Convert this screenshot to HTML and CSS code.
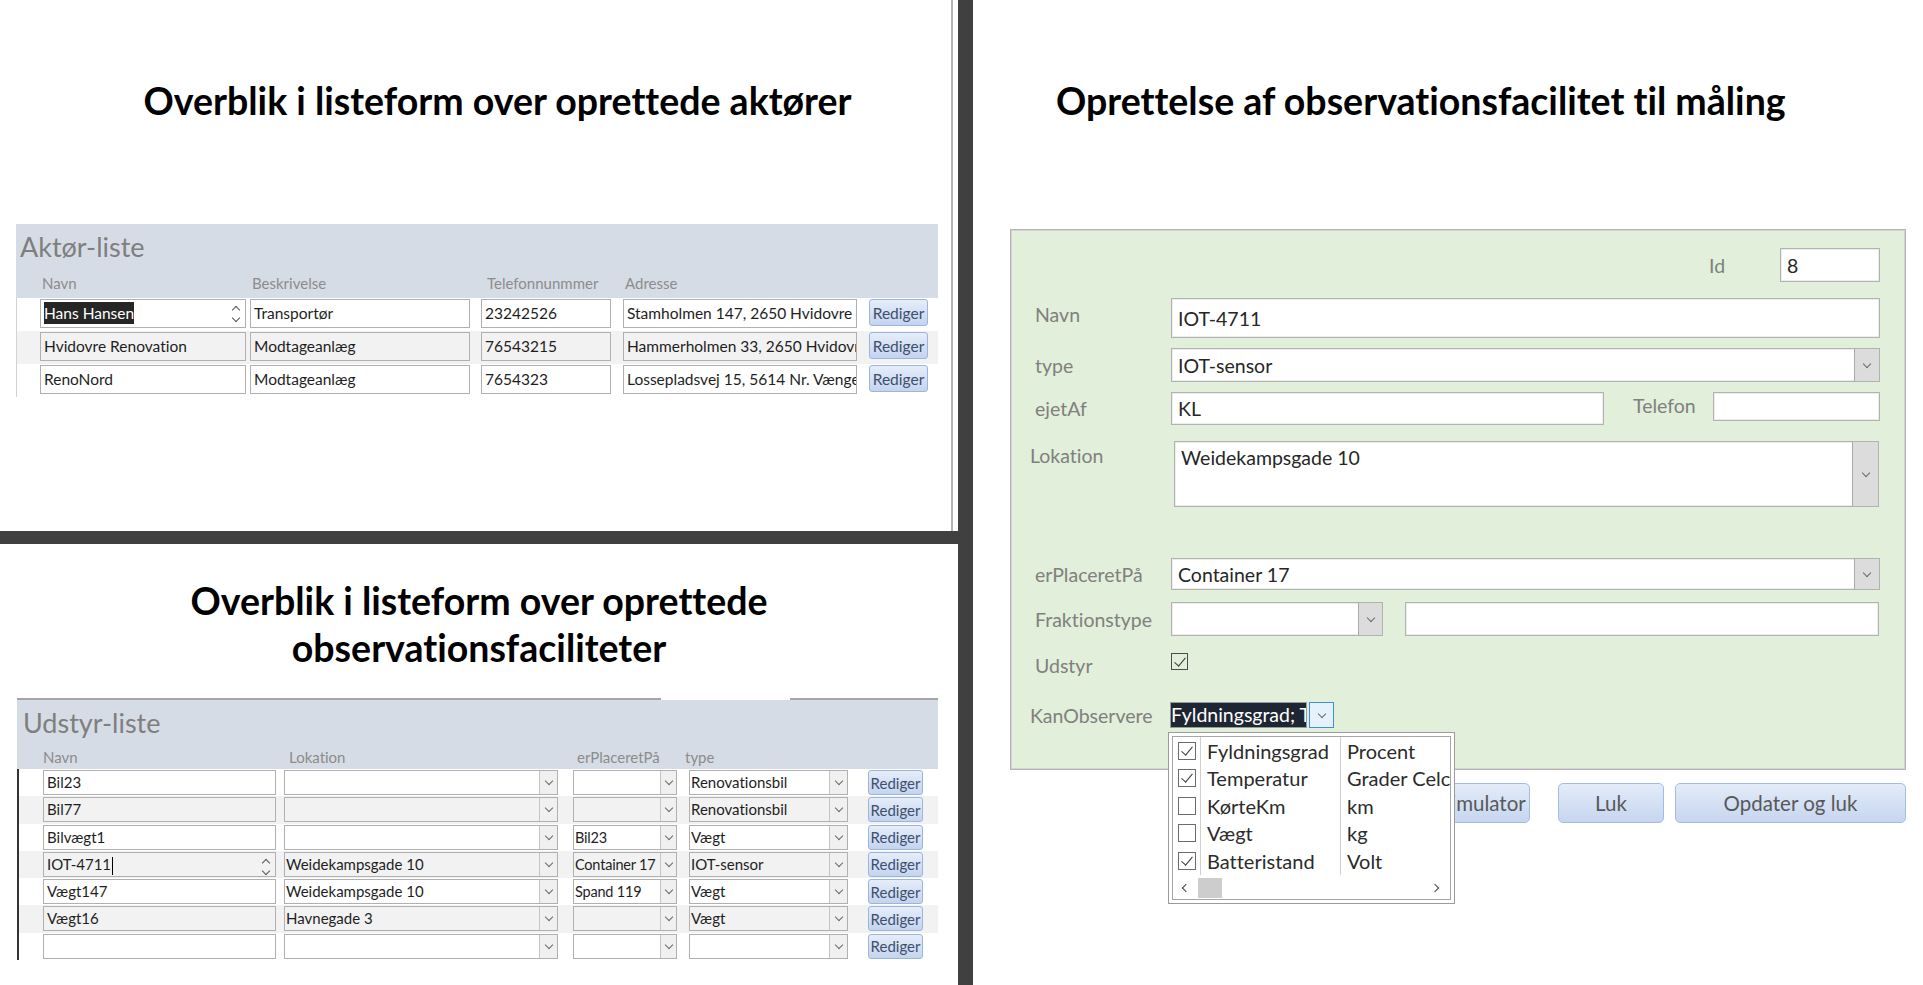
FILE: index.html
```html
<!DOCTYPE html>
<html lang="da">

<head>
    <meta charset="UTF-8">
    <meta name="viewport" content="width=device-width, initial-scale=1.0">
    <title>Aktører og observationsfaciliteter</title>
    <link rel="stylesheet" href="styles.css">
</head>

<body>
    <main class="side">
        <div class="venstre">
            <!-- øverst: aktør-listen -->
            <section class="felt-top">
                <h1 class="overskrift ov-aktor">Overblik i listeform over oprettede aktører</h1>
                <div class="liste aktorliste">
                    <div class="hoved">
                        <div class="listenavn">Aktør-liste</div>
                        <div class="kol">
                            <span>Navn</span>
                            <span>Beskrivelse</span>
                            <span class="k-tlf">Telefonnunmmer</span>
                            <span>Adresse</span>
                        </div>
                    </div>
                    <div class="raekker-a">
                        <div class="raekke">
                            <div class="felt a-navn"><span class="markeret">Hans Hansen</span><span class="spinner"></span></div>
                            <div class="felt a-besk">Transportør</div>
                            <div class="felt a-tlf">23242526</div>
                            <div class="felt a-adr">Stamholmen 147, 2650 Hvidovre</div>
                            <button class="rediger">Rediger</button>
                        </div>
                        <div class="raekke">
                            <div class="felt a-navn">Hvidovre Renovation</div>
                            <div class="felt a-besk">Modtageanlæg</div>
                            <div class="felt a-tlf">76543215</div>
                            <div class="felt a-adr">Hammerholmen 33, 2650 Hvidovre</div>
                            <button class="rediger">Rediger</button>
                        </div>
                        <div class="raekke">
                            <div class="felt a-navn">RenoNord</div>
                            <div class="felt a-besk">Modtageanlæg</div>
                            <div class="felt a-tlf">7654323</div>
                            <div class="felt a-adr">Lossepladsvej 15, 5614 Nr. Vænge</div>
                            <button class="rediger">Rediger</button>
                        </div>
                    </div>
                </div>
            </section>

            <div class="streg-vandret"></div>

            <!-- nederst: udstyr-listen -->
            <section class="felt-bund">
                <h1 class="overskrift ov-udstyr">Overblik i listeform over oprettede<br>observationsfaciliteter</h1>
                <div class="liste udstyrliste">
                    <div class="hoved">
                        <div class="listenavn">Udstyr-liste</div>
                        <div class="kol">
                            <span>Navn</span>
                            <span class="k-lok">Lokation</span>
                            <span class="k-pl">erPlaceretPå</span>
                            <span class="k-type">type</span>
                        </div>
                    </div>
                    <div class="raekker">
                        <div class="raekke">
                            <div class="felt u-navn">Bil23</div>
                            <div class="felt combo u-lok"><span class="tekst"></span><span class="pil"></span></div>
                            <div class="felt combo u-pl"><span class="tekst"></span><span class="pil"></span></div>
                            <div class="felt combo u-type"><span class="tekst">Renovationsbil</span><span class="pil"></span></div>
                            <button class="rediger">Rediger</button>
                        </div>
                        <div class="raekke">
                            <div class="felt u-navn">Bil77</div>
                            <div class="felt combo u-lok"><span class="tekst"></span><span class="pil"></span></div>
                            <div class="felt combo u-pl"><span class="tekst"></span><span class="pil"></span></div>
                            <div class="felt combo u-type"><span class="tekst">Renovationsbil</span><span class="pil"></span></div>
                            <button class="rediger">Rediger</button>
                        </div>
                        <div class="raekke">
                            <div class="felt u-navn">Bilvægt1</div>
                            <div class="felt combo u-lok"><span class="tekst"></span><span class="pil"></span></div>
                            <div class="felt combo u-pl"><span class="tekst">Bil23</span><span class="pil"></span></div>
                            <div class="felt combo u-type"><span class="tekst">Vægt</span><span class="pil"></span></div>
                            <button class="rediger">Rediger</button>
                        </div>
                        <div class="raekke">
                            <div class="felt u-navn">IOT-4711<span class="markor"></span><span class="spinner"></span></div>
                            <div class="felt combo u-lok"><span class="tekst">Weidekampsgade 10</span><span class="pil"></span></div>
                            <div class="felt combo u-pl"><span class="tekst">Container 17</span><span class="pil"></span></div>
                            <div class="felt combo u-type"><span class="tekst">IOT-sensor</span><span class="pil"></span></div>
                            <button class="rediger">Rediger</button>
                        </div>
                        <div class="raekke">
                            <div class="felt u-navn">Vægt147</div>
                            <div class="felt combo u-lok"><span class="tekst">Weidekampsgade 10</span><span class="pil"></span></div>
                            <div class="felt combo u-pl"><span class="tekst">Spand 119</span><span class="pil"></span></div>
                            <div class="felt combo u-type"><span class="tekst">Vægt</span><span class="pil"></span></div>
                            <button class="rediger">Rediger</button>
                        </div>
                        <div class="raekke">
                            <div class="felt u-navn">Vægt16</div>
                            <div class="felt combo u-lok"><span class="tekst">Havnegade 3</span><span class="pil"></span></div>
                            <div class="felt combo u-pl"><span class="tekst"></span><span class="pil"></span></div>
                            <div class="felt combo u-type"><span class="tekst">Vægt</span><span class="pil"></span></div>
                            <button class="rediger">Rediger</button>
                        </div>
                        <div class="raekke">
                            <div class="felt u-navn"></div>
                            <div class="felt combo u-lok"><span class="tekst"></span><span class="pil"></span></div>
                            <div class="felt combo u-pl"><span class="tekst"></span><span class="pil"></span></div>
                            <div class="felt combo u-type"><span class="tekst"></span><span class="pil"></span></div>
                            <button class="rediger">Rediger</button>
                        </div>
                    </div>
                </div>
            </section>
        </div>

        <div class="streg-lodret"></div>

        <!-- højre: formular -->
        <section class="hoejre">
            <h1 class="overskrift ov-maal">Oprettelse af observationsfacilitet til måling</h1>

            <div class="formular">
                <div class="r r-id">
                    <label class="lbl lbl-id">Id</label>
                    <div class="ff ff-id">8</div>
                </div>
                <div class="r r-navn">
                    <label class="lbl">Navn</label>
                    <div class="ff ff-bred">IOT-4711</div>
                </div>
                <div class="r r-type">
                    <label class="lbl">type</label>
                    <div class="ff ff-bred fcombo"><span class="tekst">IOT-sensor</span><span class="pil"></span></div>
                </div>
                <div class="r r-ejet">
                    <label class="lbl">ejetAf</label>
                    <div class="ff ff-ejet">KL</div>
                    <label class="lbl lbl-tlf">Telefon</label>
                    <div class="ff ff-tlf"></div>
                </div>
                <div class="r r-lok">
                    <label class="lbl lbl-lok">Lokation</label>
                    <div class="ff ff-lok fcombo"><span class="tekst">Weidekampsgade 10</span><span class="pil"></span></div>
                </div>
                <div class="r r-pl">
                    <label class="lbl">erPlaceretPå</label>
                    <div class="ff ff-bred fcombo"><span class="tekst">Container 17</span><span class="pil"></span></div>
                </div>
                <div class="r r-frak">
                    <label class="lbl">Fraktionstype</label>
                    <div class="ff ff-frak fcombo"><span class="tekst"></span><span class="pil"></span></div>
                    <div class="ff ff-frak2"></div>
                </div>
                <div class="r r-udstyr">
                    <label class="lbl">Udstyr</label>
                    <span class="tjek til"></span>
                </div>
                <div class="r r-kan">
                    <label class="lbl lbl-kan">KanObservere</label>
                    <div class="kan">
                        <div class="valg">Fyldningsgrad; Temperatur; Batteristand</div>
                        <span class="kanpil"></span>

                        <!-- åben rulleliste -->
                        <div class="drop">
                            <div class="drop-indre">
                                <div class="drop-r"><span class="dc"><span class="tjek til"></span></span><span class="dn">Fyldningsgrad</span><span class="du">Procent</span></div>
                                <div class="drop-r"><span class="dc"><span class="tjek til"></span></span><span class="dn">Temperatur</span><span class="du">Grader Celcius</span></div>
                                <div class="drop-r"><span class="dc"><span class="tjek"></span></span><span class="dn">KørteKm</span><span class="du">km</span></div>
                                <div class="drop-r"><span class="dc"><span class="tjek"></span></span><span class="dn">Vægt</span><span class="du">kg</span></div>
                                <div class="drop-r"><span class="dc"><span class="tjek til"></span></span><span class="dn">Batteristand</span><span class="du">Volt</span></div>
                                <div class="rullebar">
                                    <span class="rpil venstrepil"></span>
                                    <span class="greb"></span>
                                    <span class="rfyld"></span>
                                    <span class="rpil hoejrepil"></span>
                                </div>
                            </div>
                        </div>
                    </div>
                </div>
            </div>

            <div class="knapper">
                <button class="knap k-sim">Simulator</button>
                <button class="knap k-luk">Luk</button>
                <button class="knap k-opd">Opdater og luk</button>
            </div>
        </section>
    </main>
</body>

</html>
```

FILE: styles.css
```css
* {
    margin: 0;
    padding: 0;
    box-sizing: border-box;
}

body {
    font-family: Lato, "Open Sans", sans-serif;
    font-variant-ligatures: none;
    background-color: #fff;
    overflow: hidden;
}

button {
    font-variant-ligatures: none;
}

.side {
    display: grid;
    grid-template-columns: 958px 15px 950px;
    width: 1923px;
    height: 985px;
}

.venstre {
    display: grid;
    grid-template-rows: 531px 13px 441px;
}

.streg-lodret,
.streg-vandret {
    background-color: #404040;
}

.overskrift {
    font-size: 37.5px;
    font-weight: 700;
    line-height: 1.2;
    color: #000;
}

/* ---------- lister ---------- */

.felt-top {
    padding-top: 78px;
    margin-right: 5px;
    border-right: 2px solid #b4b4b4;
}

.ov-aktor {
    text-align: center;
    padding-left: 44px;
}

.aktorliste {
    margin: 101px 0 0 16px;
    width: 922px;
}

.hoved {
    position: relative;
    background-color: #d6dce5;
}

.listenavn {
    font-size: 27px;
    line-height: 32px;
    color: #7f7f7f;
}

.kol {
    display: grid;
    font-size: 15px;
    line-height: 17px;
    color: #8c8c8c;
}

.kol span {
    padding-left: 2px;
}

.aktorliste .hoved {
    padding: 7px 0 6px 4px;
}

.aktorliste .kol {
    margin-top: 12px;
    padding-left: 20px;
}

.aktorliste .kol,
.aktorliste .raekke {
    grid-template-columns: 210px 231px 142px 246px 59px;
}

.aktorliste .k-tlf {
    padding-left: 6px;
}

.raekke {
    display: grid;
    align-items: start;
}

.raekker-a {
    border-left: 1px solid #d2d2d2;
}

.aktorliste .raekke {
    height: 33px;
    padding: 1px 0 0 23px;
}

.raekke:nth-child(even),
.raekke:nth-child(even) .felt {
    background-color: #f2f2f2;
}

.felt {
    position: relative;
    height: 29px;
    padding: 0 3px;
    border: 1px solid #b0b0b0;
    background-color: #fff;
    font-size: 15.5px;
    line-height: 27px;
    color: #1e1e1e;
    white-space: nowrap;
    overflow: hidden;
}

.a-navn { width: 206px; }
.a-besk { width: 220px; }
.a-tlf { width: 130px; }
.a-adr { width: 234px; }

.markeret {
    background-color: #262626;
    color: #fff;
    padding: 2px 0;
}

.markor {
    display: inline-block;
    width: 1px;
    height: 18px;
    margin-left: 1px;
    vertical-align: middle;
    background-color: #000;
}

/* op/ned pile i et felt */
.spinner {
    position: absolute;
    right: 5px;
    top: 4px;
    width: 8px;
    height: 20px;
}

.spinner::before,
.spinner::after {
    content: "";
    position: absolute;
    left: 1px;
    width: 5px;
    height: 5px;
    border-left: 1px solid #555;
    border-top: 1px solid #555;
}

.spinner::before {
    top: 3px;
    transform: rotate(45deg);
}

.spinner::after {
    bottom: 3px;
    transform: rotate(225deg);
}

.rediger {
    width: 59px;
    height: 27px;
    font-family: Lato, sans-serif;
    font-size: 15.5px;
    color: #3d4f6e;
    background: linear-gradient(#e6edf9, #c4d4ef);
    border: 1px solid #9db4dc;
    border-radius: 3px;
}

.felt-bund {
    padding-top: 33px;
}

.ov-udstyr {
    text-align: center;
    line-height: 47px;
}

.udstyrliste {
    margin: 27px 0 0 17px;
    width: 921px;
}

.udstyrliste .hoved {
    padding: 7px 0 3px 6px;
    border-top: 2px solid #a6a6a6;
}

/* lys fane-luge i den øverste kant */
.udstyrliste .hoved::before {
    content: "";
    position: absolute;
    top: -2px;
    left: 644px;
    width: 129px;
    height: 2px;
    background-color: #fff;
}

.udstyrliste .kol {
    margin-top: 10px;
    padding-left: 18px;
}

.udstyrliste .kol,
.udstyrliste .raekke {
    grid-template-columns: 241px 289px 116px 179px 55px;
}

.k-lok { margin-left: 5px; }
.k-pl { margin-left: 4px; }
.k-type { margin-left: -4px; }

.raekker {
    border-left: 2px solid #333;
}

.udstyrliste .raekke {
    height: 27.3px;
    padding: 1px 0 0 24px;
}

.udstyrliste .felt {
    height: 25px;
    font-size: 15px;
    line-height: 23px;
}

.udstyrliste .rediger {
    width: 55px;
    height: 25px;
    font-size: 15px;
}

.u-navn { width: 233px; }
.u-lok { width: 274px; }
.u-pl { width: 104px; }
.u-type { width: 159px; }

.udstyrliste .u-pl {
    font-size: 14.5px;
    letter-spacing: -0.2px;
}

.combo {
    display: flex;
    padding: 0 0 0 1px;
}

.combo .tekst {
    flex: 1;
    overflow: hidden;
}

.combo .pil,
.fcombo .pil {
    display: flex;
    justify-content: center;
    align-items: center;
    width: 18px;
    flex-shrink: 0;
    border-left: 1px solid #c4c4c4;
    background-color: #f0f0f0;
}

.u-pl .pil {
    width: 16px;
}

.combo .pil::after,
.fcombo .pil::after,
.kanpil::after {
    content: "";
    width: 5px;
    height: 5px;
    margin-top: -3px;
    border-right: 1px solid #6a6a6a;
    border-bottom: 1px solid #6a6a6a;
    transform: rotate(45deg);
}

/* ---------- formular ---------- */

.hoejre {
    padding: 78px 17px 0 37px;
}

.ov-maal {
    margin-left: 46px;
}

.formular {
    margin-top: 106px;
    height: 541px;
    padding: 18px 25px 0 24px;
    background-color: #e2efda;
    border: 1px solid #b4b4b4;
    box-shadow: inset 0 0 0 1px #d3d3d3;
}

.r {
    display: flex;
    align-items: center;
}

.lbl {
    width: 136px;
    flex-shrink: 0;
    font-size: 19.5px;
    line-height: 23px;
    color: #808080;
}

.ff {
    height: 100%;
    padding: 0 6px;
    border: 1px solid #b2b2b2;
    box-shadow: inset 0 0 0 1px #ececec;
    background-color: #fff;
    font-size: 19.5px;
    color: #262626;
    display: flex;
    align-items: center;
    white-space: nowrap;
    overflow: hidden;
}

.r-id {
    height: 34px;
    justify-content: flex-end;
}

.lbl-id {
    width: 71px;
}

.ff-id {
    width: 100px;
}

.ff-bred {
    width: 709px;
}

.r-navn {
    height: 40px;
    margin-top: 16px;
}

.r-navn .lbl {
    margin-top: -8px;
}

.r-type {
    height: 34px;
    margin-top: 10px;
}

.fcombo {
    padding-right: 0;
}

.fcombo .tekst {
    flex: 1;
}

.fcombo .pil {
    width: 25px;
    height: 100%;
    border-left: 1px solid #a9a9a9;
    background-color: #dcdcdc;
}

.r-ejet {
    height: 33px;
    margin-top: 10px;
    align-items: flex-start;
}

.r-ejet .lbl {
    align-self: center;
}

.ff-ejet {
    width: 433px;
}

.lbl.lbl-tlf {
    width: 80px;
    margin-left: 29px;
    align-self: flex-start;
    padding-top: 2px;
}

.ff-tlf {
    width: 167px;
    height: 29px;
}

.r-lok {
    height: 66px;
    margin-top: 16px;
    align-items: flex-start;
}

.lbl-lok {
    width: 144px;
    margin-left: -5px;
    padding-top: 3px;
}

.ff-lok {
    width: 705px;
    align-items: flex-start;
    padding-top: 4px;
}

.ff-lok .pil {
    align-self: stretch;
    height: auto;
    margin-top: -4px;
    width: 26px;
}

.r-pl {
    height: 32px;
    margin-top: 51px;
}

.r-frak {
    height: 34px;
    margin-top: 12px;
}

.ff-frak {
    width: 212px;
}

.ff-frak .pil {
    width: 24px;
}

.ff-frak2 {
    width: 474px;
    margin-left: 22px;
}

.r-udstyr {
    height: 23px;
    margin-top: 17px;
    align-items: flex-start;
}

.r-udstyr .lbl {
    padding-top: 1px;
}

.tjek {
    position: relative;
    display: inline-block;
    width: 17px;
    height: 17px;
    border: 1px solid #4d4d4d;
    flex-shrink: 0;
}

.tjek.til::after {
    content: "";
    position: absolute;
    left: 5px;
    top: 1px;
    width: 5px;
    height: 10px;
    border-right: 1.5px solid #3a3a3a;
    border-bottom: 1.5px solid #3a3a3a;
    transform: rotate(40deg);
}

.r-kan {
    height: 26px;
    margin-top: 26px;
}

.lbl-kan {
    width: 140px;
    margin-left: -5px;
}

.kan {
    position: relative;
    display: flex;
    height: 26px;
}

.valg {
    width: 137px;
    background-color: #1f2633;
    color: #fff;
    font-size: 19.5px;
    line-height: 24px;
    white-space: nowrap;
    overflow: hidden;
    border: 1px solid #9a9a9a;
}

.kanpil {
    display: flex;
    justify-content: center;
    align-items: center;
    width: 25px;
    margin-left: 2px;
    background-color: #e5f1fb;
    border: 1px solid #3c8ee0;
}

.drop {
    position: absolute;
    top: 30px;
    left: -2px;
    z-index: 2;
    width: 287px;
    height: 172px;
    padding: 3px;
    background-color: #fff;
    border: 1px solid #9c9c9c;
}

.drop-indre {
    height: 100%;
    border: 1px solid #a6a6a6;
    overflow: hidden;
}

.drop-r {
    display: grid;
    grid-template-columns: 28px 140px 1fr;
    height: 27.5px;
    font-size: 20px;
    color: #2b2b2b;
}

.drop-r span {
    display: flex;
    align-items: center;
    white-space: nowrap;
    overflow: hidden;
}

.dc {
    justify-content: center;
    border-right: 1px solid #cfcfcf;
}

.dc .tjek {
    width: 18px;
    height: 18px;
    border-color: #6b6b6b;
}

.dn {
    padding-left: 6px;
    border-right: 1px solid #cfcfcf;
}

.du {
    padding-left: 6px;
}

.rullebar {
    display: flex;
    align-items: center;
    height: 22px;
    margin-top: 2px;
}

.rpil {
    position: relative;
    width: 25px;
    height: 100%;
}

.rpil::after {
    content: "";
    position: absolute;
    top: 8px;
    left: 10px;
    width: 5px;
    height: 5px;
    border-left: 1.5px solid #444;
    border-bottom: 1.5px solid #444;
    transform: rotate(45deg);
}

.hoejrepil::after {
    left: 7px;
    transform: rotate(225deg);
}

.greb {
    width: 24px;
    height: 20px;
    background-color: #cdcdcd;
}

.rfyld {
    flex: 1;
}

.knapper {
    display: flex;
    justify-content: flex-end;
    margin-top: 13px;
}

.knap {
    height: 40px;
    font-family: Lato, sans-serif;
    font-size: 20.5px;
    color: #595959;
    background: linear-gradient(#e3ebf8, #c6d6f0);
    border: 1px solid #a5bce2;
    border-radius: 5px;
}

.k-sim {
    width: 94px;
    margin-right: 28px;
}

.k-luk {
    width: 106px;
    margin-right: 11px;
}

.k-opd {
    width: 231px;
}
```
